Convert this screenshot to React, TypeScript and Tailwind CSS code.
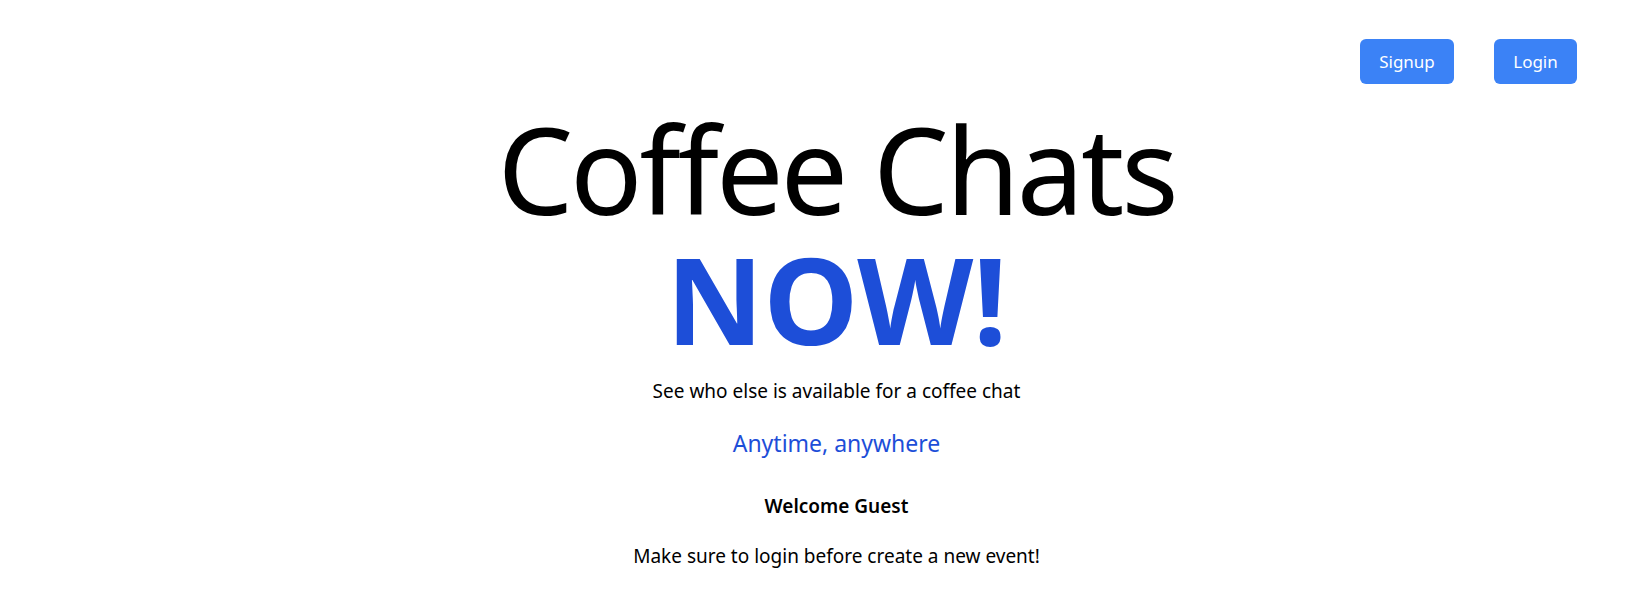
export default function App() {
  return (
    <div className="min-h-screen bg-white text-black" style={{ fontFamily: '"Noto Sans", "Open Sans", sans-serif' }}>
      <header className="flex justify-end gap-10 pt-[39px] pr-[49px]">
        <button className="h-[45px] w-[94px] rounded-md bg-[#3b82f6] text-[17px] text-white">Signup</button>
        <button className="h-[45px] w-[83px] rounded-md bg-[#3b82f6] text-[17px] text-white">Login</button>
      </header>
      <main className="flex flex-col items-center pl-[47px] text-center">
        <h1 className="mt-[20px] text-[120px] leading-[130px] font-normal tracking-[-0.026em]">Coffee Chats</h1>
        <h2 className="text-[120px] leading-[130px] font-bold text-[#1d4ed8]">NOW!</h2>
        <p className="mt-[13px] text-[19px] leading-[28px]">See who else is available for a coffee chat</p>
        <p className="mt-[22px] text-[23px] leading-[32px] text-[#1d4ed8]">Anytime, anywhere</p>
        <p className="mt-[33px] text-[19px] leading-[28px] font-semibold">Welcome Guest</p>
        <p className="mt-[22px] text-[19px] leading-[28px]">Make sure to login before create a new event!</p>
      </main>
    </div>
  );
}
